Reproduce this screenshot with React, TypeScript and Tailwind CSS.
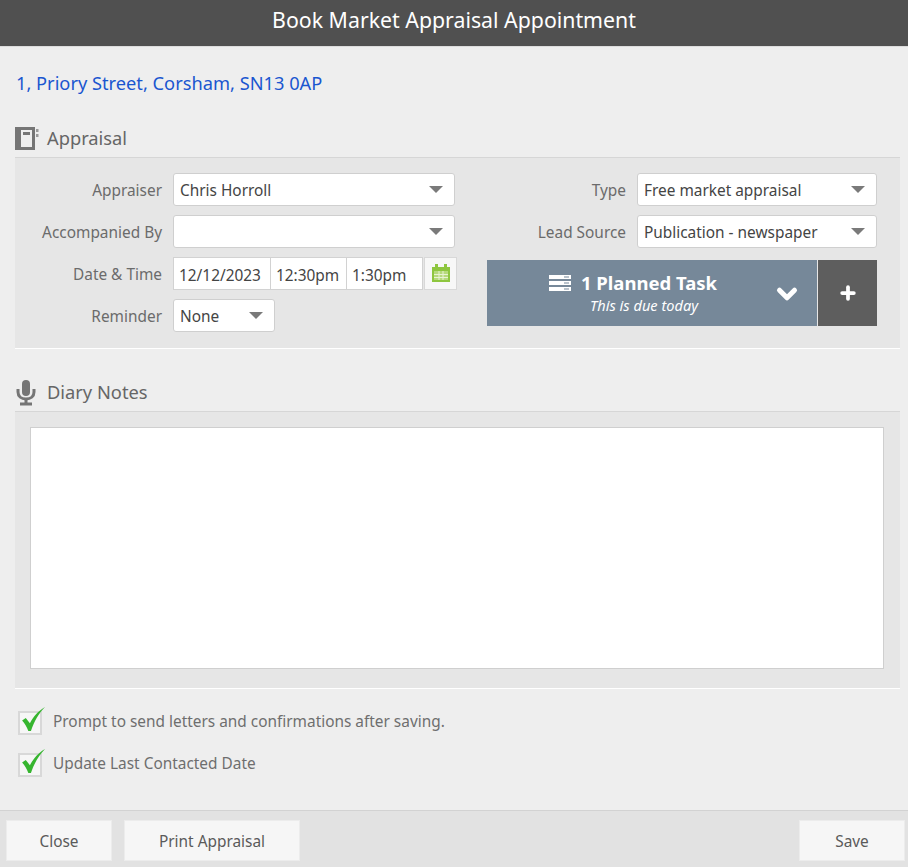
import React, { FC } from "react";
import { ChevronDown, Plus } from "lucide-react";

const SelectBox: FC<{ value?: string; width: string }> = ({ value, width }) => {
  return (
    <div
      className={`${width} h-[33px] flex items-center justify-between pl-[6px] pr-[11px] bg-white border border-[#cfcfcf] rounded-[3px] text-[#444444]`}
    >
      <span className="pt-[2px]">{value}</span>
      <span className="w-0 h-0 border-l-[7px] border-r-[7px] border-t-[7px] border-l-transparent border-r-transparent border-t-[#7a7a7a]" />
    </div>
  );
};

const FormRow: FC<{ label: string; labelWidth: string; children: React.ReactNode }> = ({
  label,
  labelWidth,
  children
}) => {
  return (
    <div className="flex items-center h-[33px]">
      <span className={`${labelWidth} pt-[2px] text-right text-[#6b6b6b] shrink-0`}>{label}</span>
      {children}
    </div>
  );
};

const SectionTitle: FC<{ icon: React.ReactNode; title: string; textClass?: string }> = ({
  icon,
  title,
  textClass
}) => {
  return (
    <div className="flex items-center h-[35px] text-[18.3px] text-[#666666] ml-[15px]">
      <span className="w-[32px] flex items-center">{icon}</span>
      <span className={textClass}>{title}</span>
    </div>
  );
};

const CheckRow: FC<{ label: string }> = ({ label }) => {
  return (
    <div className="flex items-center h-[42px] pl-[18px]">
      <span className="relative w-[24px] h-[24px] bg-[#f6f6f6] border-2 border-[#d8d8d8] mt-[2px]">
        <svg viewBox="0 0 26 26" className="absolute left-[-1px] top-[-7px] w-[27px] h-[27px]">
          <path d="M3 14 L6.5 11.5 L10.5 16.5 C14 10.5 18 5 25 1 C19 7.5 15 14 11.5 24 L9 24 C7.5 20 5.5 17 3 14 Z" fill="#36b52f" />
        </svg>
      </span>
      <span className="ml-[11px] text-[#6e6e6e]">{label}</span>
    </div>
  );
};

const FooterButton: FC<{ label: string; width: string }> = ({ label, width }) => {
  return (
    <div className={`${width} h-[41px] flex items-center justify-center pt-[2px] bg-[#f6f6f6] border border-[#ececec] text-[#5a5a5a]`}>
      {label}
    </div>
  );
};

const App: FC = () => {
  return (
    <div className="w-[908px] h-[867px] flex flex-col bg-[#eeeeee] text-[15.4px] overflow-hidden font-['Noto_Sans','Open_Sans',sans-serif]">
      <div className="h-[47px] shrink-0 flex items-center justify-center bg-[#505050] text-white text-[21.3px] border-b border-[#dcdcdc] pb-[6px]">
        Book Market Appraisal Appointment
      </div>

      <div className="flex-1 flex flex-col">
        <div className="pl-[16px] pt-[22px] h-[73px] text-[18.25px] text-[#1a56d0]">
          1, Priory Street, Corsham, SN13 0AP
        </div>

        <SectionTitle
          title="Appraisal"
          icon={
            <svg viewBox="0 0 24 24" className="w-[24px] h-[24px]">
              <path fillRule="evenodd" d="M0 1 H20 V24 H0 Z M6 4 V21 H17 V4 Z" fill="#757575" />
              <rect x="8" y="6" width="7" height="3" fill="#757575" />
              <rect x="21" y="3" width="2.5" height="3" fill="#9a9a9a" />
              <rect x="21" y="8" width="2.5" height="3" fill="#9a9a9a" />
            </svg>
          }
        />
        <div className="ml-[15px] mr-[8px] mt-[2px] h-[192px] flex bg-[#e6e6e6] border-t border-b border-t-[#d6d6d6] border-b-white pt-[15px]">
          <div className="w-[472px] shrink-0 flex flex-col gap-[9px]">
            <FormRow label="Appraiser" labelWidth="w-[147px] mr-[11px]">
              <SelectBox value="Chris Horroll" width="w-[282px]" />
            </FormRow>
            <FormRow label="Accompanied By" labelWidth="w-[147px] mr-[11px]">
              <SelectBox width="w-[282px]" />
            </FormRow>
            <FormRow label="Date & Time" labelWidth="w-[147px] mr-[11px]">
              <div className="flex h-[33px] text-[#444444]">
                <div className="w-[98px] flex items-center pl-[5px] pt-[4px] bg-white border border-[#d2d2d2]">12/12/2023</div>
                <div className="w-[76px] flex items-center pl-[5px] pt-[4px] bg-white border-y border-r border-[#d2d2d2]">12:30pm</div>
                <div className="w-[76px] flex items-center pl-[5px] pt-[4px] bg-white border-y border-r border-[#d2d2d2]">1:30pm</div>
                <div className="w-[33px] ml-[1px] flex items-center justify-center bg-[#f7f7f7] border border-[#d8d8d8]">
                  <svg viewBox="0 0 18 18" className="w-[18px] h-[18px] mb-[2px]">
                    <path d="M0 3 H3 V0 H6 V3 H12 V0 H15 V3 H18 V18 H0 Z" fill="#8ec63f" />
                    <path d="M2 7 H16 V16 H2 Z" fill="#b6d97c" />
                    <path d="M2 10 H16 V11 H2 Z M2 13 H16 V14 H2 Z M6.5 7 H7.5 V16 H6.5 Z M10.5 7 H11.5 V16 H10.5 Z" fill="#e8f3d2" />
                  </svg>
                </div>
              </div>
            </FormRow>
            <FormRow label="Reminder" labelWidth="w-[147px] mr-[11px]">
              <SelectBox value="None" width="w-[102px]" />
            </FormRow>
          </div>

          <div className="w-[390px] flex flex-col gap-[9px]">
            <FormRow label="Type" labelWidth="w-[139px] mr-[11px]">
              <SelectBox value="Free market appraisal" width="w-[240px]" />
            </FormRow>
            <FormRow label="Lead Source" labelWidth="w-[139px] mr-[11px]">
              <SelectBox value="Publication - newspaper" width="w-[240px]" />
            </FormRow>
            <div className="flex h-[66px] mt-[3px]">
              <div className="w-[330px] relative flex flex-col items-center justify-center bg-[#768899] text-white pr-[16px]">
                <div className="flex items-center font-bold text-[18.5px] leading-[24px] mr-[22px]">
                  <svg viewBox="0 0 22 16" className="w-[22px] h-[16px] mr-[10px]">
                    <path d="M0 0 H22 V4 H0 Z M0 6 H22 V10 H0 Z M0 12 H22 V16 H0 Z" fill="#ffffff" />
                    <path d="M15 1.5 H20 V2.5 H15 Z M15 7.5 H20 V8.5 H15 Z M15 13.5 H20 V14.5 H15 Z" fill="#768899" />
                  </svg>
                  1 Planned Task
                </div>
                <div className="italic text-[14.6px] leading-[20px]">This is due today</div>
                <ChevronDown className="absolute right-[15px] top-[19px] w-[30px] h-[30px]" strokeWidth={4} />
              </div>
              <div className="w-[59px] ml-[1px] flex items-center justify-center bg-[#5e5e5e] text-white">
                <Plus className="w-[20px] h-[20px]" strokeWidth={4.5} />
              </div>
            </div>
          </div>
        </div>

        <div className="mt-[26px]">
          <SectionTitle
            title="Diary Notes"
            textClass="pb-[2px]"
            icon={
              <svg viewBox="0 0 20 26" className="w-[20px] h-[26px] ml-[1px]">
                <rect x="6" y="0" width="8" height="16" rx="4" fill="#757575" />
                <path d="M2 9 V12 C2 16.5 5.5 19 10 19 C14.5 19 18 16.5 18 12 V9" fill="none" stroke="#757575" strokeWidth="3" />
                <rect x="8.5" y="19" width="3" height="4" fill="#757575" />
                <rect x="4" y="22.5" width="12" height="3" fill="#757575" />
              </svg>
            }
          />
        </div>
        <div className="ml-[15px] mr-[8px] mt-[1px] h-[278px] bg-[#e6e6e6] border-t border-b border-t-[#d6d6d6] border-b-white pt-[15px] pl-[15px] pr-[16px]">
          <div className="h-[242px] bg-white border border-[#cfcfcf]" />
        </div>

        <div className="mt-[12px]">
          <CheckRow label="Prompt to send letters and confirmations after saving." />
          <CheckRow label="Update Last Contacted Date" />
        </div>
      </div>

      <div className="h-[57px] shrink-0 flex items-start justify-between bg-[#e2e2e2] border-t border-[#d2d2d2] pt-[9px] pl-[6px] pr-[3px]">
        <div className="flex gap-[12px]">
          <FooterButton label="Close" width="w-[106px]" />
          <FooterButton label="Print Appraisal" width="w-[176px]" />
        </div>
        <FooterButton label="Save" width="w-[106px]" />
      </div>
    </div>
  );
};

export default App;
